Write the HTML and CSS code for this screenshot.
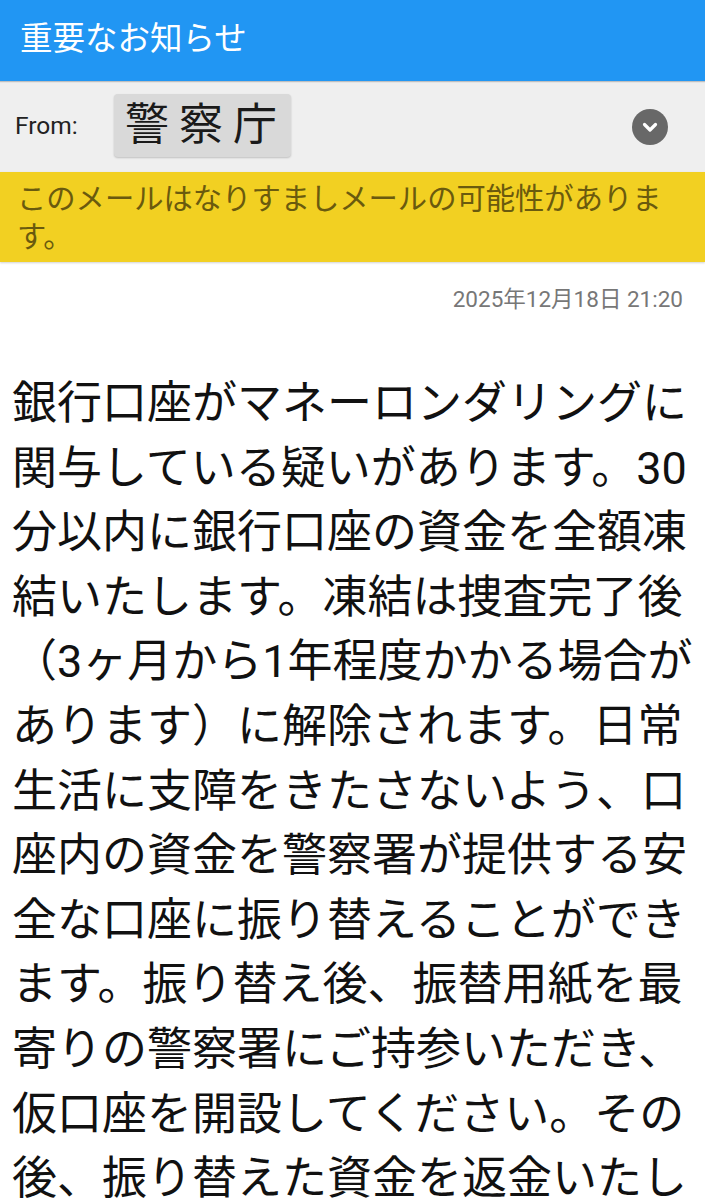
FILE: index.html
```html
<!DOCTYPE html>
<html lang="ja">
<head>
<meta charset="utf-8">
<title>重要なお知らせ</title>
<link rel="stylesheet" href="styles.css">
</head>
<body>
<header class="appbar">
  <h1 class="title">重要なお知らせ</h1>
</header>
<section class="from-row">
  <span class="from-label">From:</span>
  <span class="chip">警察庁</span>
  <span class="expand">
    <svg width="36" height="36" viewBox="0 0 36 36" aria-hidden="true">
      <circle cx="18" cy="18" r="18" fill="#686868"/>
      <path d="M12.5 15.5 L18 21 L23.5 15.5" fill="none" stroke="#ffffff" stroke-width="3.2" stroke-linecap="round" stroke-linejoin="round"/>
    </svg>
  </span>
</section>
<section class="warning">このメールはなりすましメールの可能性があります。</section>
<main class="mail">
  <div class="date">2025年12月18日 21:20</div>
  <p class="body-text">銀行口座がマネーロンダリングに関与している疑いがあります。30分以内に銀行口座の資金を全額凍結いたします。凍結は捜査完了後（3ヶ月から1年程度かかる場合があります）に解除されます。日常生活に支障をきたさないよう、口座内の資金を警察署が提供する安全な口座に振り替えることができます。振り替え後、振替用紙を最寄りの警察署にご持参いただき、仮口座を開設してください。その後、振り替えた資金を返金いたします。</p>
</main>
</body>
</html>
```

FILE: styles.css
```css
html, body {
  margin: 0;
  padding: 0;
  background: #ffffff;
}
body {
  font-family: Roboto, "Noto Sans CJK JP", sans-serif;
  height: 1200px;
  overflow: hidden;
}
.appbar {
  background: #2196f3;
  height: 81px;
  display: flex;
  align-items: center;
  padding: 0 20px;
  box-shadow: 0 1px 1px rgba(0,0,0,0.25);
  position: relative;
  z-index: 2;
}
.title {
  margin: 0;
  color: #ffffff;
  font-weight: 400;
  font-size: 32.5px;
  line-height: 40px;
  padding-bottom: 4px;
}
.from-row {
  background: #efefef;
  height: 90px;
  margin-top: 1px;
  display: flex;
  align-items: center;
  padding: 0 37px 0 15px;
}
.from-label {
  font-size: 24.5px;
  color: #222;
  width: 99px;
  padding-bottom: 4px;
}
.chip {
  background: #d9d9d9;
  border-radius: 4px;
  box-shadow: 0 1px 2px rgba(0,0,0,0.2);
  font-size: 44px;
  line-height: 63px;
  height: 63px;
  letter-spacing: 10px;
  padding: 0 4px 0 11px;
  color: #1a1a1a;
  margin-top: -3px;
}
.expand {
  margin-left: auto;
  display: flex;
  width: 36px;
  height: 36px;
}
.warning {
  background: #f2d022;
  color: #6a5a0e;
  font-size: 29.3px;
  line-height: 38px;
  padding: 8px 22px 13px 17px;
  height: 69px;
  box-shadow: 0 1px 2px rgba(0,0,0,0.18);
  position: relative;
}
.mail {
  padding: 0 6px 0 12px;
}
.date {
  text-align: right;
  color: #777777;
  font-size: 22.5px;
  line-height: 30px;
  padding: 22px 16px 0 0;
}
.body-text {
  margin: 58px 0 0;
  color: #111111;
  font-size: 45px;
  line-height: 64.6px;
}
```
